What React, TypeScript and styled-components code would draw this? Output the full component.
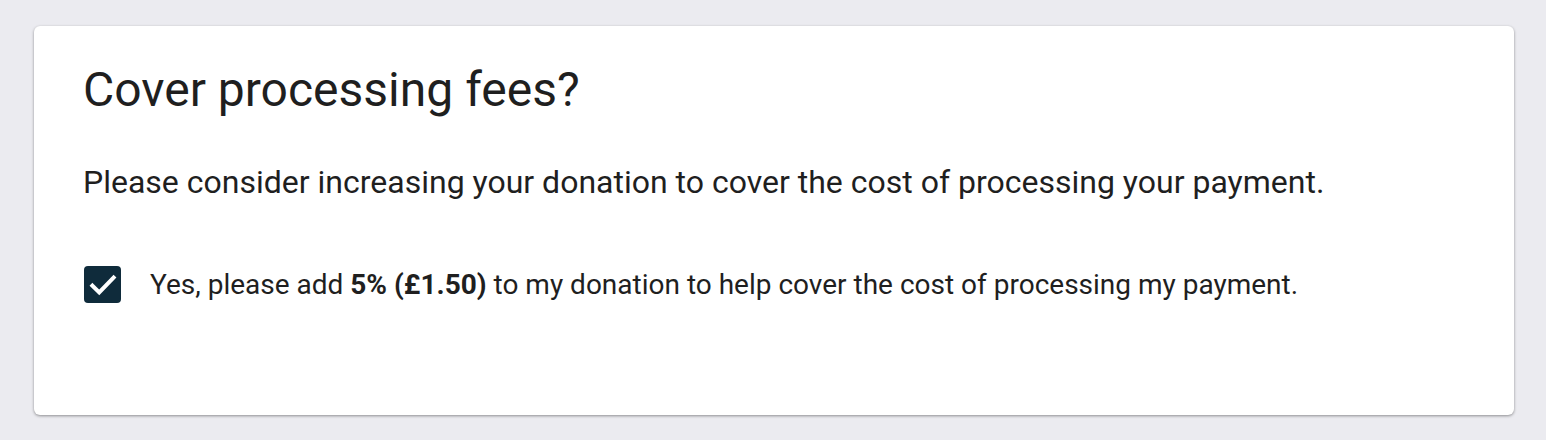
import React from "react";
import styled, { createGlobalStyle } from "styled-components";

const Global = createGlobalStyle`
  html, body { margin: 0; padding: 0; background: #ebebf0; }
  body { font-family: Roboto, "Noto Sans", Arial, sans-serif; }
`;

const Page = styled.div`
  padding: 26px 32px 24px 34px;
`;

const Card = styled.section`
  background: #ffffff;
  border-radius: 6px;
  box-shadow: 0 1px 3px rgba(0, 0, 0, 0.4);
  padding: 36px 48px 60px 49px;
  height: 389px;
  box-sizing: border-box;
  color: #1f1f1f;
`;

const Title = styled.h2`
  margin: 0;
  font-size: 48px;
  font-weight: 400;
  line-height: 56px;
`;

const Lead = styled.p`
  margin: 44px 0 0;
  font-size: 32px;
  line-height: 40px;
`;

const Row = styled.label`
  display: flex;
  align-items: center;
  gap: 29px;
  margin-top: 64px;
  font-size: 28px;
  line-height: 37px;
  cursor: pointer;
`;

const Box = styled.span<{ $checked: boolean }>`
  flex: none;
  margin-left: 1px;
  width: 37px;
  height: 37px;
  border-radius: 4px;
  background: ${(p) => (p.$checked ? "#0f2b3b" : "#fff")};
  display: flex;
  align-items: center;
  justify-content: center;
`;

export default function App() {
  const [checked, setChecked] = React.useState(true);
  return (
    <>
      <Global />
      <Page>
        <Card>
          <Title>Cover processing fees?</Title>
          <Lead>Please consider increasing your donation to cover the cost of processing your payment.</Lead>
          <Row onClick={() => setChecked(!checked)}>
            <Box $checked={checked}>
              {checked && (
                <svg width="30" height="30" viewBox="0 0 24 24" fill="none">
                  <path d="M3.5 12.5l5.5 5.5L20.5 6" stroke="#fff" strokeWidth="3.2" strokeLinecap="square" />
                </svg>
              )}
            </Box>
            <span>
              Yes, please add <b>5% (£1.50)</b> to my donation to help cover the cost of processing my payment.
            </span>
          </Row>
        </Card>
      </Page>
    </>
  );
}
